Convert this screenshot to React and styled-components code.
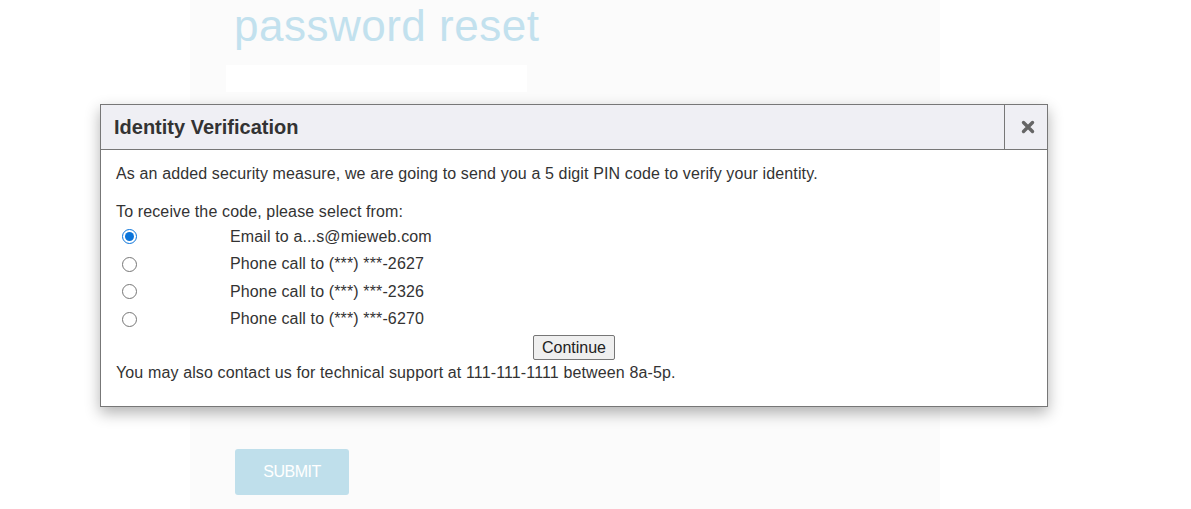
import React, { useState } from "react";
import styled, { createGlobalStyle } from "styled-components";

const GlobalStyle = createGlobalStyle`
  html, body {
    margin: 0;
    padding: 0;
    background: #ffffff;
    font-family: "Liberation Sans", Arial, sans-serif;
  }
`;

const Page = styled.div`
  position: relative;
  width: 1191px;
  height: 509px;
  overflow: hidden;
  background: #ffffff;
`;

const Panel = styled.div`
  margin-left: 190px;
  width: 750px;
  height: 509px;
  background: #fbfbfb;
  padding: 0 0 0 36px;
  box-sizing: border-box;
  display: flex;
  flex-direction: column;
`;

const Title = styled.h1`
  margin: 0;
  padding: 2px 0 0 8px;
  font-size: 44px;
  line-height: 48px;
  font-weight: normal;
  letter-spacing: 0.5px;
  color: #c2e1ee;
`;

const Field = styled.div`
  margin-top: 15px;
  width: 301px;
  height: 27px;
  background: #ffffff;
`;

const Submit = styled.button`
  margin: 357px 0 0 9px;
  width: 114px;
  height: 46px;
  border: none;
  border-radius: 3px;
  background: #bfdfeb;
  color: #ffffff;
  font-family: "Liberation Sans", Arial, sans-serif;
  font-size: 16px;
  letter-spacing: -0.5px;
`;

const Dialog = styled.div`
  position: absolute;
  left: 100px;
  top: 104px;
  width: 948px;
  box-sizing: border-box;
  border: 1px solid #777777;
  background: #ffffff;
  box-shadow: 0 6px 14px rgba(0, 0, 0, 0.3);
  color: #333333;
`;

const Header = styled.div`
  display: flex;
  height: 44px;
  background: #efeff4;
  border-bottom: 1px solid #777777;
`;

const HeaderTitle = styled.div`
  flex: 1;
  display: flex;
  align-items: center;
  padding-left: 13px;
  font-size: 20px;
  font-weight: bold;
  color: #333333;
`;

const Close = styled.button`
  width: 43px;
  border: none;
  border-left: 1px solid #777777;
  background: transparent;
  display: flex;
  align-items: center;
  justify-content: center;
  padding: 0 0 0 3px;
`;

const Body = styled.div`
  padding: 15px 15px 24px 15px;
  font-size: 16px;
  line-height: 18px;
  letter-spacing: 0.13px;
`;

const Text = styled.p`
  margin: 0 0 ${(p) => p.gap || 0}px 0;
`;

const Options = styled.div`
  display: grid;
  grid-template-columns: 114px auto;
  grid-auto-rows: 27.5px;
  align-items: center;
  margin-top: 2px;
`;

const Radio = styled.input`
  margin: 0 0 0 6px;
  width: 15px;
  height: 15px;
  accent-color: #0a74da;
`;

const Actions = styled.div`
  display: flex;
  justify-content: center;
  margin: 2px 0 4px 0;
`;

const Continue = styled.button`
  height: 25px;
  padding: 0 8px;
  font-family: "Liberation Sans", Arial, sans-serif;
  font-size: 16px;
  color: #222222;
  background: #efefef;
  border: 1px solid #767676;
  border-radius: 2px;
`;

const CloseIcon = () => (
  <svg width="14" height="14" viewBox="0 0 14 14">
    <path
      d="M2.5 2.5 L11.5 11.5 M11.5 2.5 L2.5 11.5"
      stroke="#666666"
      strokeWidth="3.4"
      strokeLinecap="round"
    />
  </svg>
);

const options = [
  "Email to a...s@mieweb.com",
  "Phone call to (***) ***-2627",
  "Phone call to (***) ***-2326",
  "Phone call to (***) ***-6270",
];

export default function App() {
  const [choice, setChoice] = useState(0);
  return (
    <>
      <GlobalStyle />
      <Page>
        <Panel>
          <Title>password reset</Title>
          <Field />
          <Submit>SUBMIT</Submit>
        </Panel>
        <Dialog>
          <Header>
            <HeaderTitle>Identity Verification</HeaderTitle>
            <Close>
              <CloseIcon />
            </Close>
          </Header>
          <Body>
            <Text gap={20}>
              As an added security measure, we are going to send you a 5 digit
              PIN code to verify your identity.
            </Text>
            <Text>To receive the code, please select from:</Text>
            <Options>
              {options.map((label, i) => (
                <React.Fragment key={label}>
                  <Radio
                    type="radio"
                    name="method"
                    checked={choice === i}
                    onChange={() => setChoice(i)}
                  />
                  <span>{label}</span>
                </React.Fragment>
              ))}
            </Options>
            <Actions>
              <Continue>Continue</Continue>
            </Actions>
            <Text>
              You may also contact us for technical support at 111-111-1111
              between 8a-5p.
            </Text>
          </Body>
        </Dialog>
      </Page>
    </>
  );
}
